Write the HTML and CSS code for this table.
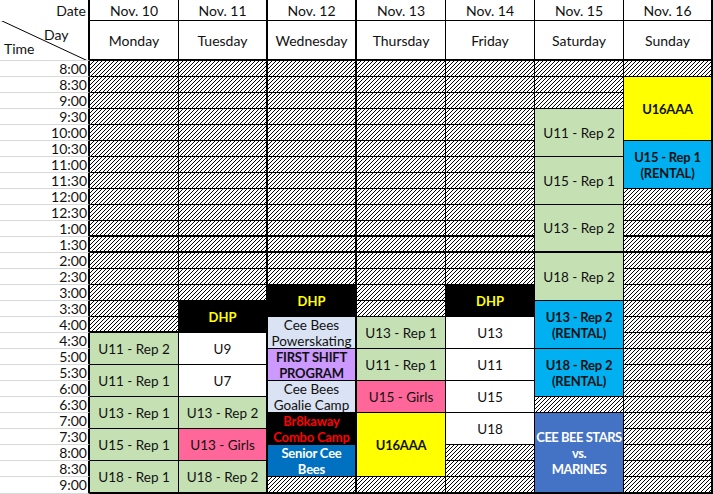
FILE: index.html
```html
<!DOCTYPE html>
<html>
<head>
<meta charset="utf-8">
<link rel="stylesheet" href="styles.css">
</head>
<body>
<div class="sheet">
  <!-- Time column -->
  <div class="cell corner-date">Date</div>
  <div class="cell corner-diag">
    <svg class="diag" viewBox="0 0 100 100" preserveAspectRatio="none"><line x1="0" y1="0" x2="100" y2="100" stroke="#000" stroke-width="1" vector-effect="non-scaling-stroke"/></svg>
    <span class="lbl-day">Day</span>
    <span class="lbl-time">Time</span>
  </div>
  <div class="cell time">8:00</div>
  <div class="cell time">8:30</div>
  <div class="cell time">9:00</div>
  <div class="cell time">9:30</div>
  <div class="cell time">10:00</div>
  <div class="cell time">10:30</div>
  <div class="cell time">11:00</div>
  <div class="cell time">11:30</div>
  <div class="cell time">12:00</div>
  <div class="cell time">12:30</div>
  <div class="cell time">1:00</div>
  <div class="cell time">1:30</div>
  <div class="cell time">2:00</div>
  <div class="cell time">2:30</div>
  <div class="cell time">3:00</div>
  <div class="cell time">3:30</div>
  <div class="cell time">4:00</div>
  <div class="cell time">4:30</div>
  <div class="cell time">5:00</div>
  <div class="cell time">5:30</div>
  <div class="cell time">6:00</div>
  <div class="cell time">6:30</div>
  <div class="cell time">7:00</div>
  <div class="cell time">7:30</div>
  <div class="cell time">8:00</div>
  <div class="cell time">8:30</div>
  <div class="cell time">9:00</div>

  <!-- Monday -->
  <div class="cell hd1">Nov. 10</div>
  <div class="cell hd2">Monday</div>
  <div class="cell h"></div><div class="cell h"></div><div class="cell h"></div><div class="cell h"></div>
  <div class="cell h"></div><div class="cell h"></div><div class="cell h"></div><div class="cell h"></div>
  <div class="cell h"></div><div class="cell h"></div><div class="cell h thb"></div><div class="cell h thb"></div>
  <div class="cell h"></div><div class="cell h"></div><div class="cell h"></div><div class="cell h"></div>
  <div class="cell h thb"></div>
  <div class="cell s2 g">U11 - Rep 2</div>
  <div class="cell s2 g">U11 - Rep 1</div>
  <div class="cell s2 g">U13 - Rep 1</div>
  <div class="cell s2 g">U15 - Rep 1</div>
  <div class="cell s2 g end">U18 - Rep 1</div>

  <!-- Tuesday -->
  <div class="cell hd1 thr">Nov. 11</div>
  <div class="cell hd2 thr">Tuesday</div>
  <div class="cell h thr"></div><div class="cell h thr"></div><div class="cell h thr"></div><div class="cell h thr"></div>
  <div class="cell h thr"></div><div class="cell h thr"></div><div class="cell h thr"></div><div class="cell h thr"></div>
  <div class="cell h thr"></div><div class="cell h thr"></div><div class="cell h thr thb"></div><div class="cell h thr thb"></div>
  <div class="cell h thr"></div><div class="cell h thr"></div><div class="cell h thr"></div>
  <div class="cell s2 bk dhp thr">DHP</div>
  <div class="cell s2 w thr">U9</div>
  <div class="cell s2 w thr">U7</div>
  <div class="cell s2 g thr">U13 - Rep 2</div>
  <div class="cell s2 pk thr">U13 - Girls</div>
  <div class="cell s2 g thr end">U18 - Rep 2</div>

  <!-- Wednesday -->
  <div class="cell hd1 thr">Nov. 12</div>
  <div class="cell hd2 thr">Wednesday</div>
  <div class="cell h thr"></div><div class="cell h thr"></div><div class="cell h thr"></div><div class="cell h thr"></div>
  <div class="cell h thr"></div><div class="cell h thr"></div><div class="cell h thr"></div><div class="cell h thr"></div>
  <div class="cell h thr"></div><div class="cell h thr"></div><div class="cell h thr thb"></div><div class="cell h thr thb"></div>
  <div class="cell h thr"></div><div class="cell h thr"></div>
  <div class="cell s2 bk dhp thr">DHP</div>
  <div class="cell s2 lb thr two">Cee Bees<br>Powerskating</div>
  <div class="cell s2 pu b thr two">FIRST SHIFT<br>PROGRAM</div>
  <div class="cell s2 lb thr two">Cee Bees<br>Goalie Camp</div>
  <div class="cell s2 bk red b thr two">Br8kaway<br>Combo Camp</div>
  <div class="cell s2 db wt b thr two">Senior Cee<br>Bees</div>
  <div class="cell h thr end"></div>

  <!-- Thursday -->
  <div class="cell hd1">Nov. 13</div>
  <div class="cell hd2">Thursday</div>
  <div class="cell h"></div><div class="cell h"></div><div class="cell h"></div><div class="cell h"></div>
  <div class="cell h"></div><div class="cell h"></div><div class="cell h"></div><div class="cell h"></div>
  <div class="cell h"></div><div class="cell h"></div><div class="cell h thb"></div><div class="cell h thb"></div>
  <div class="cell h"></div><div class="cell h"></div><div class="cell h"></div><div class="cell h"></div>
  <div class="cell s2 g">U13 - Rep 1</div>
  <div class="cell s2 g">U11 - Rep 1</div>
  <div class="cell s2 pk">U15 - Girls</div>
  <div class="cell s4 ye b">U16AAA</div>
  <div class="cell h end"></div>

  <!-- Friday -->
  <div class="cell hd1">Nov. 14</div>
  <div class="cell hd2">Friday</div>
  <div class="cell h"></div><div class="cell h"></div><div class="cell h"></div><div class="cell h"></div>
  <div class="cell h"></div><div class="cell h"></div><div class="cell h"></div><div class="cell h"></div>
  <div class="cell h"></div><div class="cell h"></div><div class="cell h thb"></div><div class="cell h thb"></div>
  <div class="cell h"></div><div class="cell h"></div>
  <div class="cell s2 bk dhp">DHP</div>
  <div class="cell s2 w">U13</div>
  <div class="cell s2 w">U11</div>
  <div class="cell s2 w">U15</div>
  <div class="cell s2 w">U18</div>
  <div class="cell h"></div><div class="cell h"></div><div class="cell h end"></div>

  <!-- Saturday -->
  <div class="cell hd1">Nov. 15</div>
  <div class="cell hd2">Saturday</div>
  <div class="cell h"></div><div class="cell h"></div><div class="cell h"></div>
  <div class="cell s3 g">U11 - Rep 2</div>
  <div class="cell s3 g">U15 - Rep 1</div>
  <div class="cell s3 g thb">U13 - Rep 2</div>
  <div class="cell s3 g">U18 - Rep 2</div>
  <div class="cell s3 cy b two">U13 - Rep 2<br>(RENTAL)</div>
  <div class="cell s3 cy b two">U18 - Rep 2<br>(RENTAL)</div>
  <div class="cell h"></div>
  <div class="cell s5 st wt b two end">CEE BEE STARS<br>vs.<br>MARINES</div>

  <!-- Sunday -->
  <div class="cell hd1 lastc">Nov. 16</div>
  <div class="cell hd2 lastc">Sunday</div>
  <div class="cell h lastc"></div>
  <div class="cell s4 ye b lastc">U16AAA</div>
  <div class="cell s3 cy b two lastc">U15 - Rep 1<br>(RENTAL)</div>
  <div class="cell h lastc"></div><div class="cell h lastc"></div><div class="cell h lastc thb"></div><div class="cell h lastc thb"></div>
  <div class="cell h lastc"></div><div class="cell h lastc"></div><div class="cell h lastc"></div><div class="cell h lastc"></div>
  <div class="cell h lastc"></div><div class="cell h lastc"></div><div class="cell h lastc"></div><div class="cell h lastc"></div>
  <div class="cell h lastc"></div><div class="cell h lastc"></div><div class="cell h lastc"></div><div class="cell h lastc"></div>
  <div class="cell h lastc"></div><div class="cell h lastc"></div><div class="cell h lastc end"></div>
</div>
</body>
</html>
```

FILE: styles.css
```css
html, body {
  margin: 0;
  padding: 0;
  background: #fff;
}

body {
  font-family: Lato, "Open Sans", sans-serif;
  font-size: 13.5px;
  color: #111;
}

.sheet {
  display: grid;
  grid-template-columns: 90px repeat(7, 89px);
  grid-template-rows: 21px 40px repeat(26, 16px) 17px;
  grid-auto-flow: column;
  width: 713px;
}

.cell {
  box-sizing: border-box;
  border-right: 1px solid #000;
  border-bottom: 1px solid #000;
  display: flex;
  align-items: center;
  justify-content: center;
  text-align: center;
  line-height: 16px;
  white-space: nowrap;
  overflow: hidden;
}

/* time column */
.corner-date {
  border-right: 2px solid #000;
  border-bottom: none;
  justify-content: flex-end;
  padding-right: 2px;
  padding-top: 1px;
  font-size: 14px;
}

.corner-diag {
  position: relative;
  border-right: 2px solid #000;
  border-bottom: 1px solid #d9d9d9;
  font-size: 14px;
}

.diag {
  position: absolute;
  left: 0;
  top: -1px;
  width: 88px;
  height: 41px;
}

.lbl-day {
  position: absolute;
  left: 44px;
  top: 6px;
}

.lbl-time {
  position: absolute;
  left: 4px;
  top: 20px;
}

.time {
  border-right: 2px solid #000;
  border-bottom: 1px solid #d9d9d9;
  justify-content: flex-end;
  padding-right: 1px;
  font-size: 14px;
}

/* headers */
.hd1 {
  padding-top: 1px;
  font-size: 14px;
}

.hd2 {
  border-bottom-width: 2px;
  font-size: 14px;
  padding-top: 1px;
}

/* borders */
.thr {
  border-right-width: 2px;
}

.lastc {
  border-right-width: 2px;
}

.thb {
  border-bottom-width: 2px;
}

.end {
  border-bottom-width: 2px;
}

/* spans */
.s2 { grid-row: span 2; }
.s3 { grid-row: span 3; }
.s4 { grid-row: span 4; }
.s5 { grid-row: span 5; }

/* hatch: thin "/" diagonal stripes every 4px */
.h {
  background-color: #fff;
  background-image: linear-gradient(to bottom right, transparent 42%, #000 42%, #000 58%, transparent 58%);
  background-size: 4px 4px;
  background-position: 0 0;
}

/* fills */
.g { background: #c5e0b3; }
.w { background: #fff; }
.pk { background: #ff6699; }
.lb { background: #dae3f3; }
.pu { background: #cc99ff; }
.db { background: #0070c0; }
.cy { background: #00b0f0; }
.ye { background: #ffff00; }
.bk { background: #000; }
.st { background: #4472c4; }

.b {
  font-weight: 700;
  font-size: 13px;
  letter-spacing: -0.2px;
}

.dhp {
  color: #ffff00;
  font-weight: 700;
  font-size: 13px;
}

.red { color: #ff0000; }
.wt { color: #fff; }

.st {
  letter-spacing: -0.5px;
}

.two {
  flex-direction: column;
}
```
